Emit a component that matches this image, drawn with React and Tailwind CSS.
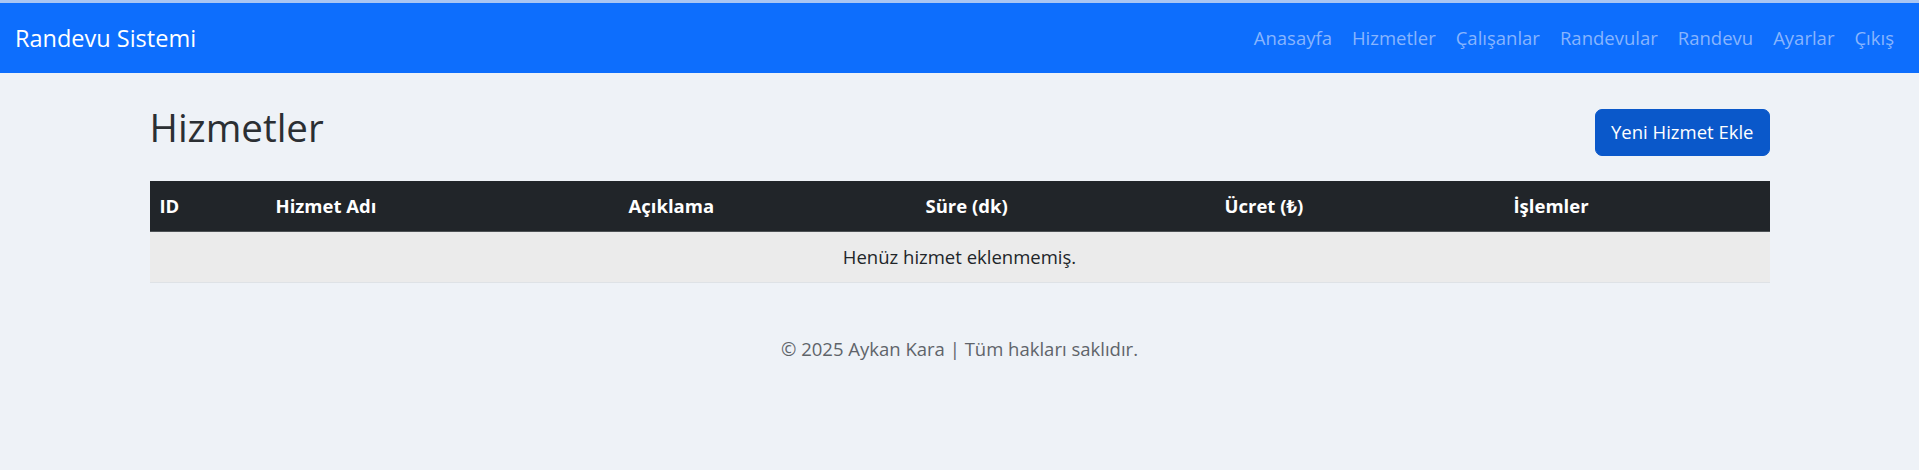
export default function App() {
  const links = ["Anasayfa", "Hizmetler", "Çalışanlar", "Randevular", "Randevu", "Ayarlar", "Çıkış"];

  const columns = [
    { label: "ID", width: "w-[116px]" },
    { label: "Hizmet Adı", width: "w-[353px]" },
    { label: "Açıklama", width: "w-[297px]" },
    { label: "Süre (dk)", width: "w-[299px]" },
    { label: "Ücret (₺)", width: "w-[289px]" },
    { label: "İşlemler", width: "w-[266px]" },
  ];

  return (
    <div className="min-h-[470px] bg-[#eef2f7] font-['Segoe_UI','Open_Sans','Noto_Sans',sans-serif] text-[18.5px] leading-[30px] text-[#212529]">

      {/* ================= NAVBAR ================= */}

      <nav className="border-t-[3px] border-[#a9c6f3] bg-[#0d6efd]">
        <div className="flex h-[70px] items-center justify-between px-[15px]">
          <a className="text-[23.5px] text-white">Randevu Sistemi</a>

          <ul className="flex items-center">
            {links.map((link) => (
              <li key={link}>
                <a className="block px-[10px] py-[10px] text-[#88b5fe]">{link}</a>
              </li>
            ))}
          </ul>
        </div>
      </nav>

      {/* ================= CONTENT ================= */}

      <main className="mx-auto mt-[30px] w-[1620px]">

        <div className="mb-[20px] flex items-center justify-between">
          <h2 className="mb-[10px] text-[38.5px] font-medium leading-[48px] text-[#2b2f33]">Hizmetler</h2>

          <button className="h-[47px] rounded-[7px] border border-[#0a58ca] bg-[#0a58ca] px-[15px] text-white">
            Yeni Hizmet Ekle
          </button>
        </div>

        <table className="mb-[20px] w-full table-fixed border-collapse">
          <thead>
            <tr className="h-[50px] border-b border-[#4d5154] bg-[#212529] text-white">
              {columns.map((col) => (
                <th key={col.label} className={`${col.width} px-[10px] text-left font-bold`}>
                  {col.label}
                </th>
              ))}
            </tr>
          </thead>
          <tbody>
            <tr className="h-[51px] border-b border-[#dee2e6] bg-[#ebebeb]">
              <td colSpan={6} className="px-[10px] text-center">
                Henüz hizmet eklenmemiş.
              </td>
            </tr>
          </tbody>
        </table>

      </main>

      {/* ================= FOOTER ================= */}

      <footer className="pt-[31px] text-center text-[#5f646a]">
        © 2025 Aykan Kara | Tüm hakları saklıdır.
      </footer>

    </div>
  );
}
